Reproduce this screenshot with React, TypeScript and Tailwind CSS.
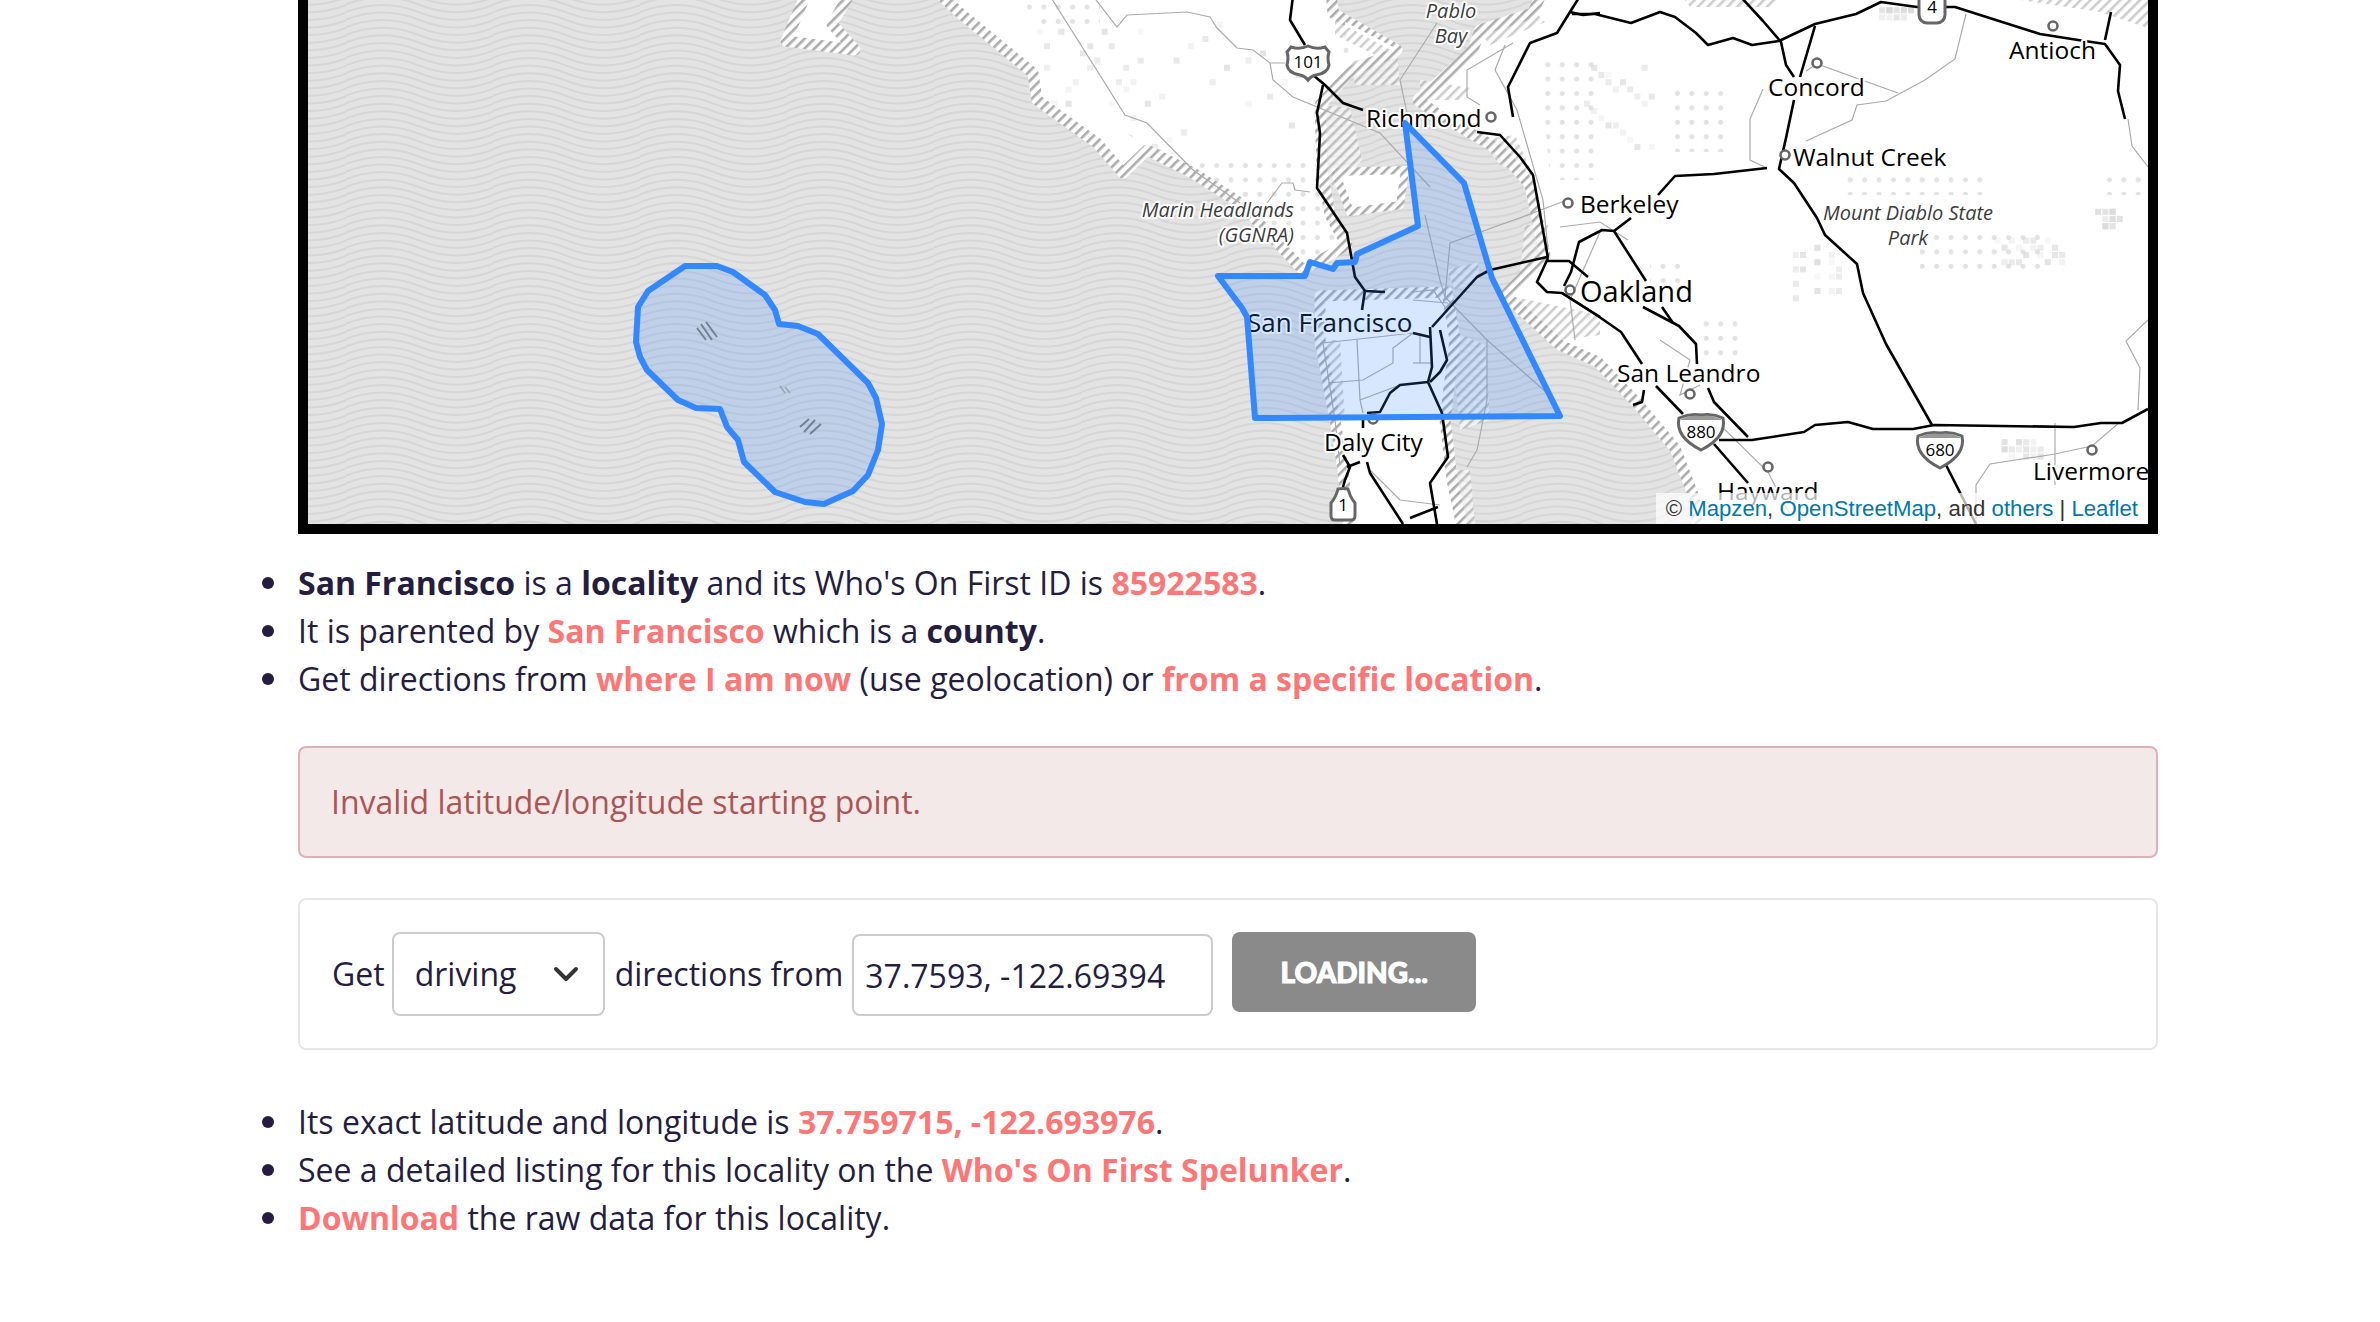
import { ChevronDown } from "lucide-react";

const polygonSf =
  "1405,123 1464,183 1492,278 1560,416 1255,418 1247,317 1242,308 1218,276 1305,276 1310,262 1333,269 1337,263 1355,262 1357,254 1418,226";
const polygonBlob =
  "685,266 717,266 733,272 765,295 775,310 779,324 798,326 818,334 868,383 876,398 882,424 878,450 868,475 853,491 824,504 805,502 775,492 744,462 738,440 727,427 720,409 696,408 678,400 647,370 640,357 636,342 638,307 648,291";

const water =
  "M300 -20 H812 L786 41 L855 50 L832 24 L858 -20 H925 L960 13 L1033 73 L1037 100 L1097 143 L1123 173 L1147 150 L1193 173 L1240 203 L1303 270 L1347 245 L1330 215 L1322 170 L1320 105 L1350 72 L1397 50 L1333 13 L1330 -20 H1547 L1533 13 L1480 30 L1473 50 L1443 78 L1418 100 L1440 116 L1465 130 L1500 150 L1530 185 L1545 255 L1505 295 L1560 345 L1598 362 L1637 403 L1675 448 L1694 497 L1700 540 H1465 L1452 480 L1445 420 L1455 340 L1447 292 L1320 296 L1320 340 L1335 420 L1343 470 L1350 540 H300 Z";

// patches of denser hatching around the bay
const hatchPatches = [
  "1322,105 1350,108 1362,160 1335,190 1322,170",
  "1350,62 1397,52 1400,85 1355,85",
  "1480,140 1515,135 1535,180 1500,165",
  "1525,225 1548,225 1545,258 1520,270",
  "1505,295 1600,315 1600,335 1560,340",
  "1450,330 1485,345 1490,420 1460,430",
  "1322,340 1340,340 1345,420 1335,420",
  "1450,470 1470,470 1475,524 1455,524",
  "1447,270 1478,262 1480,280 1455,290",
  "1420,80 1470,88 1465,100 1420,100",
  "1335,20 1400,55 1385,60 1335,35",
  "1478,30 1535,12 1545,22 1490,45",
  "2020,0 2148,0 2148,28 2100,12",
  "1685,0 1780,0 1770,7 1690,7",
];

// thick roads, black
const roads = [
  "1572,14 1595,14 1631,23 1660,12 1675,17 1696,33 1708,45 1733,38 1752,45 1779,41 1815,24 1856,14 1881,2 1917,7 1955,7 2040,34 2078,40 2105,44 2120,65 2118,91 2125,119",
  "2105,40 2111,12",
  "1740,-4 1763,21 1781,42 1786,65 1794,77",
  "1815,26 1800,77",
  "1794,100 1786,138 1779,169 1794,183 1817,218 1825,235 1857,264 1863,293 1886,344 1932,425",
  "1946,465 1976,524",
  "1767,168 1714,174 1675,176 1658,195",
  "1631,218 1614,231 1602,230 1579,242 1571,272 1564,286",
  "1614,231 1646,281",
  "1643,307 1679,326 1696,344 1697,364",
  "1662,307 1673,323",
  "1562,293 1598,316 1621,332 1642,364",
  "1656,386 1683,414",
  "1714,444 1748,483",
  "1708,388 1714,402 1748,437",
  "1719,440 1752,440 1804,432 1815,425 1848,422 1873,429 1913,429 1934,425 2074,427 2101,423 2122,423 2148,409",
  "1644,390 1642,402 1633,405",
  "1547,261 1569,261 1588,277",
  "1548,258 1537,282 1547,292 1562,293 1600,317",
  "1547,257 1490,270 1477,277 1432,327",
  "1430,327 1432,367 1428,382 1400,385 1390,393 1380,412 1367,413",
  "1428,382 1442,413 1448,457 1430,483 1437,524",
  "1440,330 1447,360 1440,372 1430,382",
  "1413,333 1430,337",
  "1293,-4 1290,20 1305,45",
  "1313,75 1325,85 1343,103 1363,110",
  "1323,85 1317,113 1320,133 1317,188 1347,233 1355,277 1365,291 1385,292",
  "1365,290 1362,310",
  "1477,132 1500,135 1520,157 1533,175 1548,258",
  "1513,117 1508,87 1530,43 1557,33 1570,12 1580,-4",
  "1570,12 1583,15 1600,13",
  "1343,455 1350,467 1345,480 1343,487",
  "1347,467 1360,462",
  "1367,462 1370,473 1403,524",
  "1410,518 1438,507",
  "1363,420 1363,428",
];

// thin grey roads
const minorRoads = [
  "1050,-4 1125,115 1147,123 1193,170 1240,203",
  "1093,-4 1117,27 1127,15 1187,12 1210,17 1217,28 1237,48 1253,50 1270,63 1285,63",
  "1270,63 1273,80 1293,97 1380,133 1430,187",
  "1267,203 1282,183 1293,183 1295,190 1310,192",
  "1806,71 1817,64 1898,93",
  "1886,101 1857,105 1852,120 1806,141",
  "1886,101 1925,80 1955,59 1966,14",
  "1763,89 1750,119 1750,160 1767,168",
  "2128,119 2132,146 2148,167",
  "2148,320 2126,341 2140,368 2138,410",
  "2120,422 2092,446 2055,454 1990,464 1976,485 1976,524",
  "2055,423 2055,485",
  "1437,23 1400,80 1407,113",
  "1513,43 1467,70 1467,97 1480,105",
  "1505,45 1495,70 1517,110 1543,200 1548,250",
  "1567,200 1533,213 1450,243 1445,297",
  "1323,343 1413,333",
  "1413,292 1433,290 1447,310",
  "1357,340 1360,400 1363,413",
  "1328,383 1363,380 1393,363 1393,348 1413,333",
  "1413,363 1432,363",
  "1420,333 1420,363",
  "1413,300 1448,303",
  "1487,340 1487,400 1477,450 1467,467",
  "1425,215 1440,280 1445,297",
  "1400,385 1360,400",
  "1323,343 1335,420 1340,465",
  "1445,297 1487,340 1555,400",
  "1710,415 1768,472 1790,515",
  "1660,340 1690,360 1680,395 1700,385",
  "1560,227 1600,222 1628,240",
  "1600,232 1570,300 1575,340",
  "1370,470 1400,500 1440,505",
];

const dotRegions = [
  "1020,0 1100,0 1100,30 1040,30",
  "1120,130 1190,160 1340,160 1340,262 1300,262 1240,200",
  "1340,20 1397,50 1340,60",
  "1540,60 1600,60 1600,180 1550,180",
  "1675,84 1725,84 1725,152 1675,152",
  "1840,170 1990,170 1990,195 1840,195",
  "1920,232 2040,232 2040,270 1920,270",
  "2100,170 2148,170 2148,195 2100,195",
  "1650,260 1680,260 1680,300 1650,300",
  "1700,320 1740,320 1740,360 1700,360",
];

const blockClusters = [
  [1040, 30, 100, 80],
  [1125, 25, 170, 125],
  [1583, 60, 70, 85],
  [1790, 241, 55, 55],
  [1994, 234, 70, 28],
  [2097, 207, 20, 18],
  [1997, 438, 44, 16],
  [1880, 5, 30, 10],
];

function blocks() {
  const out: { x: number; y: number; o: number }[] = [];
  blockClusters.forEach(([cx, cy, w, h], c) => {
    for (let i = 0; i < 20; i++) {
      const x = cx + ((i * 37 + c * 13) % w);
      const y = cy + ((i * 23 + c * 7) % h);
      out.push({
        x: Math.round(x / 7.2) * 7.2,
        y: Math.round(y / 7.2) * 7.2,
        o: 0.2 + ((i * 7) % 10) / 18,
      });
    }
  });
  return out;
}

const places: [number, number][] = [
  [1491, 117],
  [1817, 63],
  [2053, 26],
  [1785, 155],
  [1568, 203],
  [1570, 290],
  [1690, 394],
  [1768, 467],
  [2092, 450],
  [1373, 419],
];

function Label({
  x,
  y,
  size = 24.5,
  italic,
  anchor = "start",
  children,
}: {
  x: number;
  y: number;
  size?: number;
  italic?: boolean;
  anchor?: "start" | "middle" | "end";
  children: string;
}) {
  return (
    <text
      x={x}
      y={y}
      fontSize={size}
      fontStyle={italic ? "italic" : "normal"}
      textAnchor={anchor}
      fill={italic ? "#3c3c3c" : "#000"}
      stroke="#fff"
      strokeWidth={4}
      strokeLinejoin="round"
      className="[paint-order:stroke] font-['Open_Sans',sans-serif]"
    >
      {children}
    </text>
  );
}

function ShieldText({ y = 6, children }: { y?: number; children: string }) {
  return (
    <text y={y} fontSize={17} textAnchor="middle" fill="#000" className="font-['Open_Sans',sans-serif] font-medium">
      {children}
    </text>
  );
}

function Interstate({ x, y, text }: { x: number; y: number; text: string }) {
  return (
    <g transform={`translate(${x} ${y})`}>
      <path
        d="M-22 -13 Q-11 -18 0 -16 Q11 -18 22 -13 Q26 6 0 19 Q-26 6 -22 -13 Z"
        fill="#fff"
        stroke="#666"
        strokeWidth={3}
      />
      <path d="M-20 -12 Q-10 -17 0 -15 Q10 -17 20 -12 L20 -11 L-20 -11 Z" fill="#999" />
      <ShieldText y={7}>{text}</ShieldText>
    </g>
  );
}

function MapArt() {
  return (
    <svg viewBox="308 0 1840 524" className="block h-[524px] w-[1840px] bg-white">
      <defs>
        <pattern id="waves" x="52" width="147" height="38" patternUnits="userSpaceOnUse">
          <rect width="147" height="38" fill="#e3e3e3" />
          {[-3, -2, -1, 0, 1, 2, 3, 4, 5, 6, 7].map((k) => {
            const y = 4.8 + k * 7.6;
            return (
              <path
                key={k}
                d={`M-1 ${y} Q36.75 ${y - 15} 73.5 ${y} T148 ${y}`}
                fill="none"
                stroke="#d6d6d6"
                strokeWidth="2"
              />
            );
          })}
        </pattern>
        <pattern id="hatch" width="7" height="7" patternUnits="userSpaceOnUse" patternTransform="rotate(45)">
          <rect width="7" height="7" fill="#fff" />
          <rect width="2.6" height="7" fill="#ababab" />
        </pattern>
        <pattern id="dots" width="14.4" height="14.4" patternUnits="userSpaceOnUse">
          <circle cx="7" cy="7" r="2.5" fill="#e2e2e2" />
        </pattern>
      </defs>

      {dotRegions.map((p) => (
        <polygon key={p} points={p} fill="url(#dots)" />
      ))}
      {blocks().map((b, i) => (
        <rect key={i} x={b.x} y={b.y} width={6} height={6} fill="#d8d8d8" opacity={b.o} />
      ))}

      <path d={water} fill="url(#waves)" />
      <path d={water} fill="none" stroke="url(#hatch)" strokeWidth={11} strokeLinejoin="round" />
      {/* islands and fingers in the bay */}
      <polygon
        points="1335,172 1405,170 1400,205 1350,212"
        fill="#fff"
        stroke="url(#hatch)"
        strokeWidth={8}
        strokeLinejoin="round"
      />
      <polygon points="1345,22 1395,48 1350,64" fill="#fff" />
      {hatchPatches.map((p) => (
        <polygon key={p} points={p} fill="url(#hatch)" opacity={0.6} />
      ))}

      {minorRoads.map((r) => (
        <polyline key={r} points={r} fill="none" stroke="#ababab" strokeWidth={1.2} />
      ))}
      {roads.map((r) => (
        <polyline key={r} points={r} fill="none" stroke="#000" strokeWidth={2.6} strokeLinejoin="round" />
      ))}

      {places.map(([x, y]) => (
        <circle key={x} cx={x} cy={y} r={4.5} fill="#fff" stroke="#666" strokeWidth={2.6} />
      ))}

      {/* US 101 */}
      <g transform="translate(1308 62)">
        <path
          d="M-17 -15 Q-8 -12 0 -16 Q8 -12 17 -15 L21 -10 Q19 -4 21 3 Q20 11 8 13 Q3 14 0 18 Q-3 14 -8 13 Q-20 11 -21 3 Q-19 -4 -21 -10 Z"
          fill="#fff"
          stroke="#666"
          strokeWidth={3}
        />
        <ShieldText y={6}>101</ShieldText>
      </g>
      {/* CA 4 */}
      <g transform="translate(1932 7)">
        <rect x={-13} y={-16} width={26} height={32} rx={8} fill="#fff" stroke="#666" strokeWidth={3} />
        <ShieldText y={6}>4</ShieldText>
      </g>
      {/* CA 1 */}
      <g transform="translate(1343 505)">
        <path
          d="M-5 -16 Q0 -17 5 -16 Q7 -8 12 -2 L12 11 Q12 15 8 15 L-8 15 Q-12 15 -12 11 L-12 -2 Q-7 -8 -5 -16 Z"
          fill="#fff"
          stroke="#666"
          strokeWidth={3}
        />
        <ShieldText y={6}>1</ShieldText>
      </g>
      <Interstate x={1701} y={431} text="880" />
      <Interstate x={1940} y={449} text="680" />

      <Label x={1366} y={127}>Richmond</Label>
      <Label x={1451} y={18} size={20} italic anchor="middle">Pablo</Label>
      <Label x={1451} y={43} size={20} italic anchor="middle">Bay</Label>
      <Label x={1294} y={217} size={20} italic anchor="end">Marin Headlands</Label>
      <Label x={1294} y={242} size={20} italic anchor="end">(GGNRA)</Label>
      <Label x={1247} y={332} size={26}>San Francisco</Label>
      <Label x={1324} y={451}>Daly City</Label>
      <Label x={1580} y={213}>Berkeley</Label>
      <Label x={1580} y={302} size={29}>Oakland</Label>
      <Label x={1793} y={166}>Walnut Creek</Label>
      <Label x={1908} y={220} size={20} italic anchor="middle">Mount Diablo State</Label>
      <Label x={1908} y={245} size={20} italic anchor="middle">Park</Label>
      <Label x={1768} y={96}>Concord</Label>
      <Label x={2009} y={59}>Antioch</Label>
      <Label x={1617} y={382}>San Leandro</Label>
      <Label x={1717} y={500}>Hayward</Label>
      <Label x={2033} y={480}>Livermore</Label>

      {/* overlay */}
      <polygon points={polygonSf} fill="#3388ff" fillOpacity={0.2} stroke="#3388ff" strokeWidth={6} strokeLinejoin="round" />
      <polygon points={polygonBlob} fill="#3388ff" fillOpacity={0.2} stroke="#3388ff" strokeWidth={6} strokeLinejoin="round" />
      <path d="M701 324 L712 340 M706 322 L717 337 M697 328 L706 340" stroke="#74818f" strokeWidth={2} />
      <path d="M800 427 L809 419 M804 432 L815 420 M810 434 L821 424" stroke="#74818f" strokeWidth={2} />
      <path d="M780 386 L785 393 M785 387 L790 393" stroke="#9aa5b2" strokeWidth={1.5} />
    </svg>
  );
}

function Link({ children }: { children: string }) {
  return <a className="font-bold text-[#ff7676]">{children}</a>;
}

function Item({ children }: { children: React.ReactNode }) {
  return (
    <li className="relative before:absolute before:top-[18px] before:left-[-36px] before:h-[12px] before:w-[12px] before:rounded-full before:bg-[#241d3f] before:content-['']">
      {children}
    </li>
  );
}

export default function App() {
  return (
    <div className="min-h-[1322px] bg-white font-['Open_Sans',sans-serif] text-[32px] leading-[48px] text-[#241d3f]">
      <div className="ml-[298px] w-[1860px]">
        <div className="relative h-[534px] overflow-hidden border-r-[10px] border-b-[10px] border-l-[10px] border-black">
          <MapArt />
          <div className="absolute right-0 bottom-0 flex h-[31px] w-[492px] items-center justify-end bg-white/70 pr-[10px] font-['Liberation_Sans',sans-serif] text-[22.2px] leading-[26px] text-[#333]">
            ©&nbsp;<a className="text-[#0078a8]">Mapzen</a>,&nbsp;
            <a className="text-[#0078a8]">OpenStreetMap</a>, and&nbsp;
            <a className="text-[#0078a8]">others</a>&nbsp;|&nbsp;
            <a className="text-[#0078a8]">Leaflet</a>
          </div>
        </div>

        <ul className="mt-[25px]">
          <Item>
            <b>San Francisco</b> is a <b>locality</b> and its Who's On First ID is <Link>85922583</Link>.
          </Item>
          <Item>
            It is parented by <Link>San Francisco</Link> which is a <b>county</b>.
          </Item>
          <Item>
            Get directions from <Link>where I am now</Link> (use geolocation) or <Link>from a specific location</Link>.
          </Item>
        </ul>

        <div className="mt-[43px] rounded-lg border-2 border-[#dcb2b2] bg-[#f4e9e9] px-[31px] py-[30px] text-[#ab5555]">
          Invalid latitude/longitude starting point.
        </div>

        <div className="mt-[40px] flex h-[152px] items-start rounded-lg border-2 border-[#e6e6e6] pt-[32px] pl-[32px]">
          <span className="mt-[18px] mr-[7px]">Get</span>
          <div className="flex h-[84px] w-[213px] items-center justify-between rounded-lg border-2 border-[#cccccc] pr-[17px] pl-[21px]">
            <span>driving</span>
            <ChevronDown size={40} strokeWidth={2.4} className="text-[#333]" />
          </div>
          <span className="mt-[18px] ml-[10px]">directions from</span>
          <input
            defaultValue="37.7593, -122.69394"
            className="mt-[2px] ml-[9px] h-[82px] w-[361px] rounded-lg border-2 border-[#cccccc] pl-[11px] text-[32px] text-[#241d3f] outline-none"
          />
          <button className="ml-[19px] h-[80px] w-[244px] rounded-lg bg-[#8a8a8a] font-['Lato',sans-serif] text-[28px] font-black text-white [-webkit-text-stroke:1px_white]">
            LOADING...
          </button>
        </div>

        <ul className="mt-[48px]">
          <Item>
            Its exact latitude and longitude is <Link>37.759715, -122.693976</Link>.
          </Item>
          <Item>
            See a detailed listing for this locality on the <Link>Who's On First Spelunker</Link>.
          </Item>
          <Item>
            <Link>Download</Link> the raw data for this locality.
          </Item>
        </ul>
      </div>
    </div>
  );
}
